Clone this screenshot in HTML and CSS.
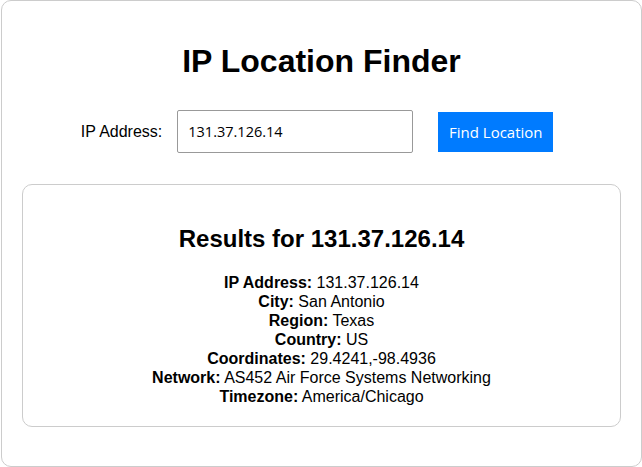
FILE: index.html
```html
<!DOCTYPE html>
<html lang="en">
<head>
<meta charset="utf-8">
<title>IP Location Finder</title>
<link rel="stylesheet" href="styles.css">
</head>
<body>
<div class="card">
  <h1 class="title">IP Location Finder</h1>
  <form class="search">
    <label class="search-label" for="ip">IP Address:</label>
    <input class="search-input" id="ip" type="text" value="131.37.126.14">
    <button class="search-button" type="button">Find Location</button>
  </form>
  <div class="results">
    <h2 class="results-title">Results for 131.37.126.14</h2>
    <div class="results-list">
      <div class="row"><b>IP Address:</b> 131.37.126.14</div>
      <div class="row"><b>City:</b> San Antonio</div>
      <div class="row"><b>Region:</b> Texas</div>
      <div class="row"><b>Country:</b> US</div>
      <div class="row"><b>Coordinates:</b> 29.4241,-98.4936</div>
      <div class="row"><b>Network:</b> AS452 Air Force Systems Networking</div>
      <div class="row"><b>Timezone:</b> America/Chicago</div>
    </div>
  </div>
</div>
</body>
</html>
```
FILE: styles.css
```css
html, body {
  margin: 0;
  padding: 0;
  background: #fff;
}
body {
  font-family: "Liberation Sans", Arial, sans-serif;
  font-size: 16px;
  color: #000;
}
.card {
  box-sizing: border-box;
  width: 641px;
  margin: 0 0 0 1px;
  border: 1px solid #ccc;
  border-radius: 10px;
  padding: 21px 20px 20px;
}
.title {
  font-size: 32px;
  font-weight: bold;
  text-align: center;
  margin: 21px 0;
}
.search {
  display: flex;
  align-items: center;
  justify-content: center;
  padding: 9px 9px 11px 0;
  margin: 0 0 20px;
}
.search-label {
  margin-right: 15px;
}
.search-input {
  box-sizing: border-box;
  width: 236px;
  height: 43px;
  padding: 0 10px;
  border: 1px solid #999;
  border-radius: 2px;
  font-family: "Open Sans", sans-serif;
  font-size: 14.5px;
  color: #000;
  margin-right: 25px;
}
.search-button {
  box-sizing: border-box;
  width: 115px;
  height: 40px;
  border: none;
  background: #007bff;
  color: #fff;
  font-family: "Open Sans", sans-serif;
  font-size: 15px;
  padding: 0;
}
.results {
  border: 1px solid #ccc;
  border-radius: 10px;
  padding: 20px;
  margin-bottom: 19px;
  text-align: center;
}
.results-title {
  font-size: 24px;
  margin: 20px 0;
}
.results-list {
  line-height: 19px;
}
.row b {
  font-weight: bold;
}
```
